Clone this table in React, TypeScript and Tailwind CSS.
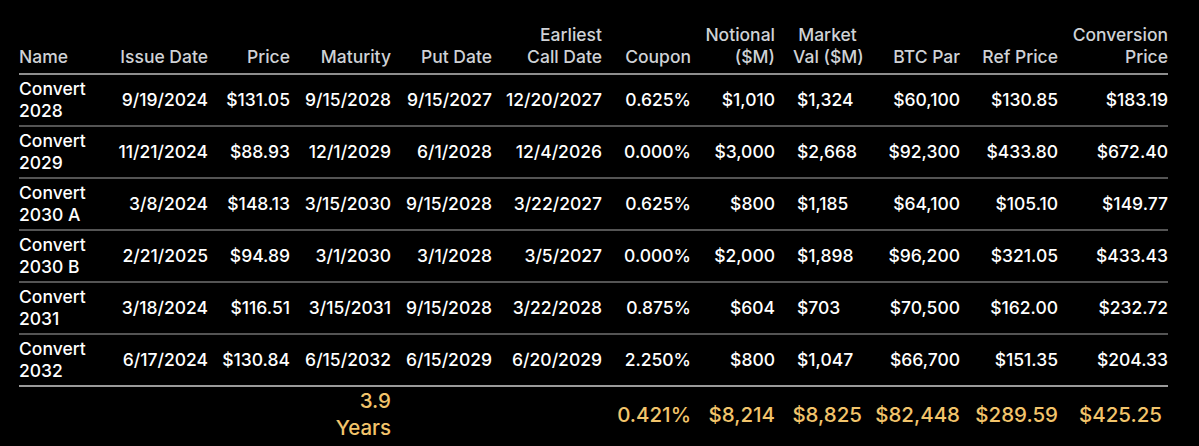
import React from 'react';

type Row = {
  name: [string, string];
  issue: string;
  price: string;
  maturity: string;
  put: string;
  call: string;
  coupon: string;
  notional: string;
  market: string;
  btcPar: string;
  refPrice: string;
  conversion: string;
};

const rows: Row[] = [
  { name: ['Convert', '2028'], issue: '9/19/2024', price: '$131.05', maturity: '9/15/2028', put: '9/15/2027', call: '12/20/2027', coupon: '0.625%', notional: '$1,010', market: '$1,324', btcPar: '$60,100', refPrice: '$130.85', conversion: '$183.19' },
  { name: ['Convert', '2029'], issue: '11/21/2024', price: '$88.93', maturity: '12/1/2029', put: '6/1/2028', call: '12/4/2026', coupon: '0.000%', notional: '$3,000', market: '$2,668', btcPar: '$92,300', refPrice: '$433.80', conversion: '$672.40' },
  { name: ['Convert', '2030 A'], issue: '3/8/2024', price: '$148.13', maturity: '3/15/2030', put: '9/15/2028', call: '3/22/2027', coupon: '0.625%', notional: '$800', market: '$1,185', btcPar: '$64,100', refPrice: '$105.10', conversion: '$149.77' },
  { name: ['Convert', '2030 B'], issue: '2/21/2025', price: '$94.89', maturity: '3/1/2030', put: '3/1/2028', call: '3/5/2027', coupon: '0.000%', notional: '$2,000', market: '$1,898', btcPar: '$96,200', refPrice: '$321.05', conversion: '$433.43' },
  { name: ['Convert', '2031'], issue: '3/18/2024', price: '$116.51', maturity: '3/15/2031', put: '9/15/2028', call: '3/22/2028', coupon: '0.875%', notional: '$604', market: '$703', btcPar: '$70,500', refPrice: '$162.00', conversion: '$232.72' },
  { name: ['Convert', '2032'], issue: '6/17/2024', price: '$130.84', maturity: '6/15/2032', put: '6/15/2029', call: '6/20/2029', coupon: '2.250%', notional: '$800', market: '$1,047', btcPar: '$66,700', refPrice: '$151.35', conversion: '$204.33' },
];

const th = 'text-right font-medium align-bottom pb-[5px] px-0 whitespace-nowrap';
const td = 'text-right align-middle py-[3px] px-0 whitespace-nowrap';
const tf = 'text-right align-middle px-0 whitespace-nowrap';

export default function App() {
  return (
    <div
      className="w-[1199px] h-[446px] bg-black text-white pl-[19px] pt-[24px] overflow-hidden"
      style={{ fontFamily: 'Inter, "Noto Sans", sans-serif' }}
    >
      <table className="table-fixed border-collapse w-[1149px] text-[17.5px] leading-[22px]">
        <colgroup>
          <col className="w-[91px]" />
          <col className="w-[98px]" />
          <col className="w-[82px]" />
          <col className="w-[101px]" />
          <col className="w-[101px]" />
          <col className="w-[110px]" />
          <col className="w-[89px]" />
          <col className="w-[84px]" />
          <col className="w-[87px]" />
          <col className="w-[98px]" />
          <col className="w-[98px]" />
          <col className="w-[110px]" />
        </colgroup>
        <thead>
          <tr className="text-[#cfd2d6] border-b-2 border-[#8e8e8e]">
            <th className="text-left font-medium align-bottom pb-[5px] px-0">Name</th>
            <th className={th}>Issue Date</th>
            <th className={th}>Price</th>
            <th className={th}>Maturity</th>
            <th className={th}>Put Date</th>
            <th className={th}>Earliest<br />Call Date</th>
            <th className={th}>Coupon</th>
            <th className={th}>Notional<br />($M)</th>
            <th className="text-center font-medium align-bottom pb-[5px] pl-[18px] pr-0 whitespace-nowrap">Market<br />Val ($M)</th>
            <th className={th}>BTC Par</th>
            <th className={th}>Ref Price</th>
            <th className={th}>Conversion<br />Price</th>
          </tr>
        </thead>
        <tbody className="font-medium">
          {rows.map((r, i) => (
            <tr
              key={r.name[1]}
              className={i === rows.length - 1 ? 'border-b-2 border-[#9a9a9a]' : 'border-b-2 border-[#545454]'}
            >
              <td className="text-left align-middle py-[3px] px-0 whitespace-nowrap">{r.name[0]}<br />{r.name[1]}</td>
              <td className={td}>{r.issue}</td>
              <td className={td}>{r.price}</td>
              <td className={td}>{r.maturity}</td>
              <td className={td}>{r.put}</td>
              <td className={td}>{r.call}</td>
              <td className={td}>{r.coupon}</td>
              <td className={td}>{r.notional}</td>
              <td className="text-left align-middle py-[3px] pl-[22px] pr-0 whitespace-nowrap">{r.market}</td>
              <td className={td}>{r.btcPar}</td>
              <td className={td}>{r.refPrice}</td>
              <td className={td}>{r.conversion}</td>
            </tr>
          ))}
        </tbody>
        <tfoot className="text-[#f2c46b] text-[20.5px] leading-[27px] font-medium">
          <tr>
            <td />
            <td />
            <td />
            <td className="text-right align-top pt-0 px-0">3.9<br />Years</td>
            <td />
            <td />
            <td className={tf}>0.421%</td>
            <td className={tf}>$8,214</td>
            <td className={tf}>$8,825</td>
            <td className={tf}>$82,448</td>
            <td className={tf}>$289.59</td>
            <td className="text-right align-middle pr-[6px] whitespace-nowrap">$425.25</td>
          </tr>
        </tfoot>
      </table>
    </div>
  );
}
